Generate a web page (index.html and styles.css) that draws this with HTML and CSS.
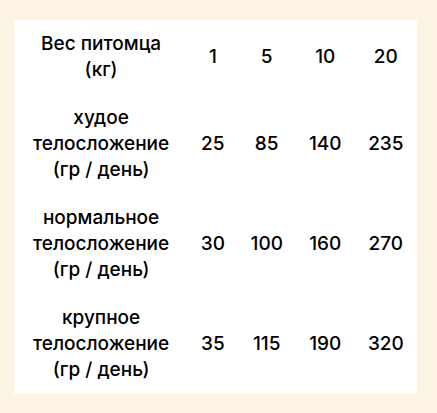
FILE: index.html
```html
<!DOCTYPE html>
<html lang="ru">
<head>
<meta charset="utf-8">
<link rel="stylesheet" href="styles.css">
</head>
<body>
<div class="page">
<table class="feed">
<tr><td class="label">Вес питомца<br>(кг)</td><td>1</td><td>5</td><td>10</td><td>20</td></tr>
<tr><td class="label">худое<br>телосложение<br>(гр / день)</td><td>25</td><td>85</td><td>140</td><td>235</td></tr>
<tr><td class="label">нормальное<br>телосложение<br>(гр / день)</td><td>30</td><td>100</td><td>160</td><td>270</td></tr>
<tr><td class="label">крупное<br>телосложение<br>(гр / день)</td><td>35</td><td>115</td><td>190</td><td>320</td></tr>
</table>
</div>
</body>
</html>
```
FILE: styles.css
```css
html, body { margin: 0; padding: 0; }
body { background: #fdf3e4; font-family: Inter, "Noto Sans", sans-serif; color: #000; }
.page { padding: 20px 20px 18px 14px; }
.feed { background: #fff; border-collapse: collapse; width: 403px; font-size: 19px; font-weight: 500; line-height: 26px; }
.feed td { padding: 11px 10px; text-align: center; vertical-align: middle; }
```
